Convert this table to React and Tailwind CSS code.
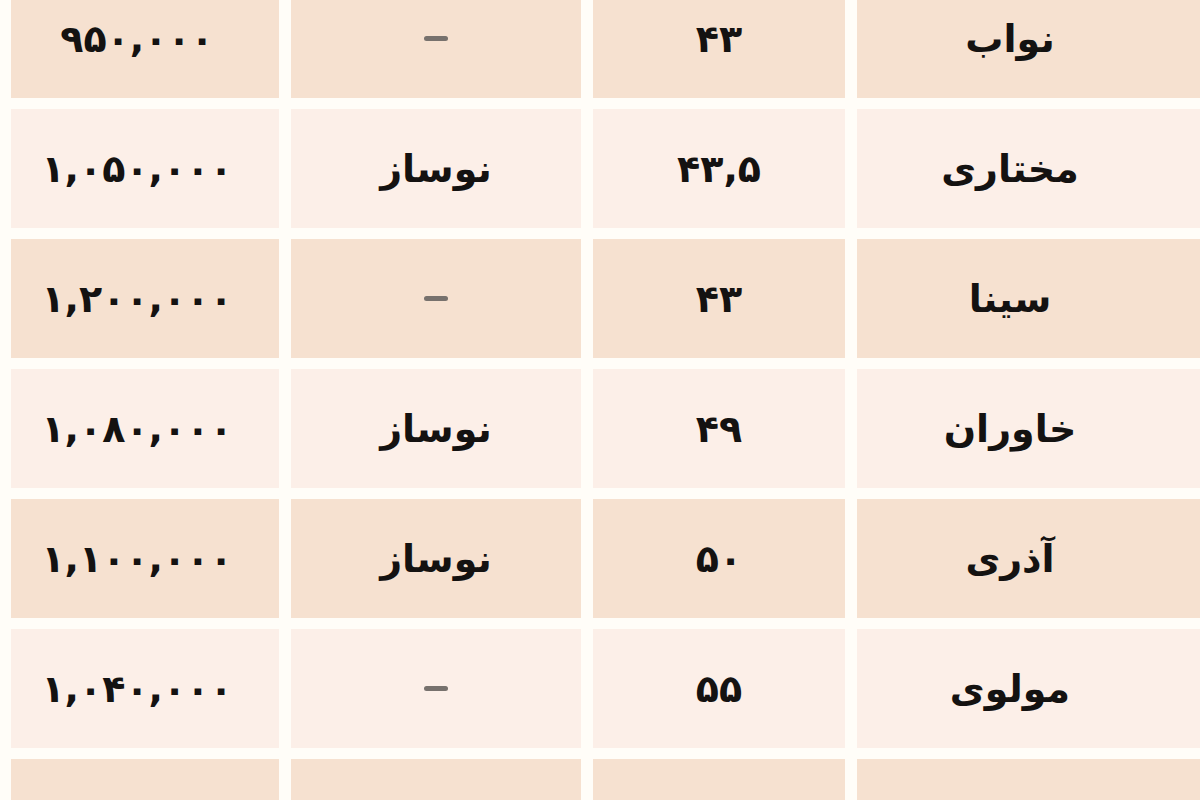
const rows = [
    ['نواب', '۴۳', '-', '۹۵۰,۰۰۰'],
    ['مختاری', '۴۳,۵', 'نوساز', '۱,۰۵۰,۰۰۰'],
    ['سینا', '۴۳', '-', '۱,۲۰۰,۰۰۰'],
    ['خاوران', '۴۹', 'نوساز', '۱,۰۸۰,۰۰۰'],
    ['آذری', '۵۰', 'نوساز', '۱,۱۰۰,۰۰۰'],
    ['مولوی', '۵۵', '-', '۱,۰۴۰,۰۰۰'],
    ['نارمک', '۶۰', 'نوساز', '۹۰۰,۰۰۰'],
];

function Cell({ value, className }) {
    const isDash = value === '-';
    return (
        <div className={`flex items-center justify-center ${className}`}>
            {isDash ? (
                <span className="block w-[24px] h-[5px] rounded-full bg-[#77716d]" />
            ) : (
                <span className="font-bold text-[38px] leading-none text-[#141211]">{value}</span>
            )}
        </div>
    );
}

export default function App() {
    return (
        <div
            dir="rtl"
            className="w-[1200px] h-[800px] overflow-hidden bg-[#fffdf8]"
            style={{ fontFamily: '"DejaVu Sans", sans-serif' }}
        >
            <div className="-mt-[21px] flex flex-col gap-[11px] pl-[11px]">
                {rows.map((row, i) => {
                    const bg = i % 2 === 0 ? 'bg-[#f6e1d0]' : 'bg-[#fcefe8]';
                    return (
                        <div key={i} className="flex gap-[12px] h-[119px]">
                            <Cell value={row[0]} className={`w-[343px] pr-[37px] ${bg}`} />
                            <Cell value={row[1]} className={`w-[252px] ${bg}`} />
                            <Cell value={row[2]} className={`w-[290px] ${bg}`} />
                            <Cell value={row[3]} className={`w-[268px] pr-4 ${bg}`} />
                        </div>
                    );
                })}
            </div>
        </div>
    );
}
